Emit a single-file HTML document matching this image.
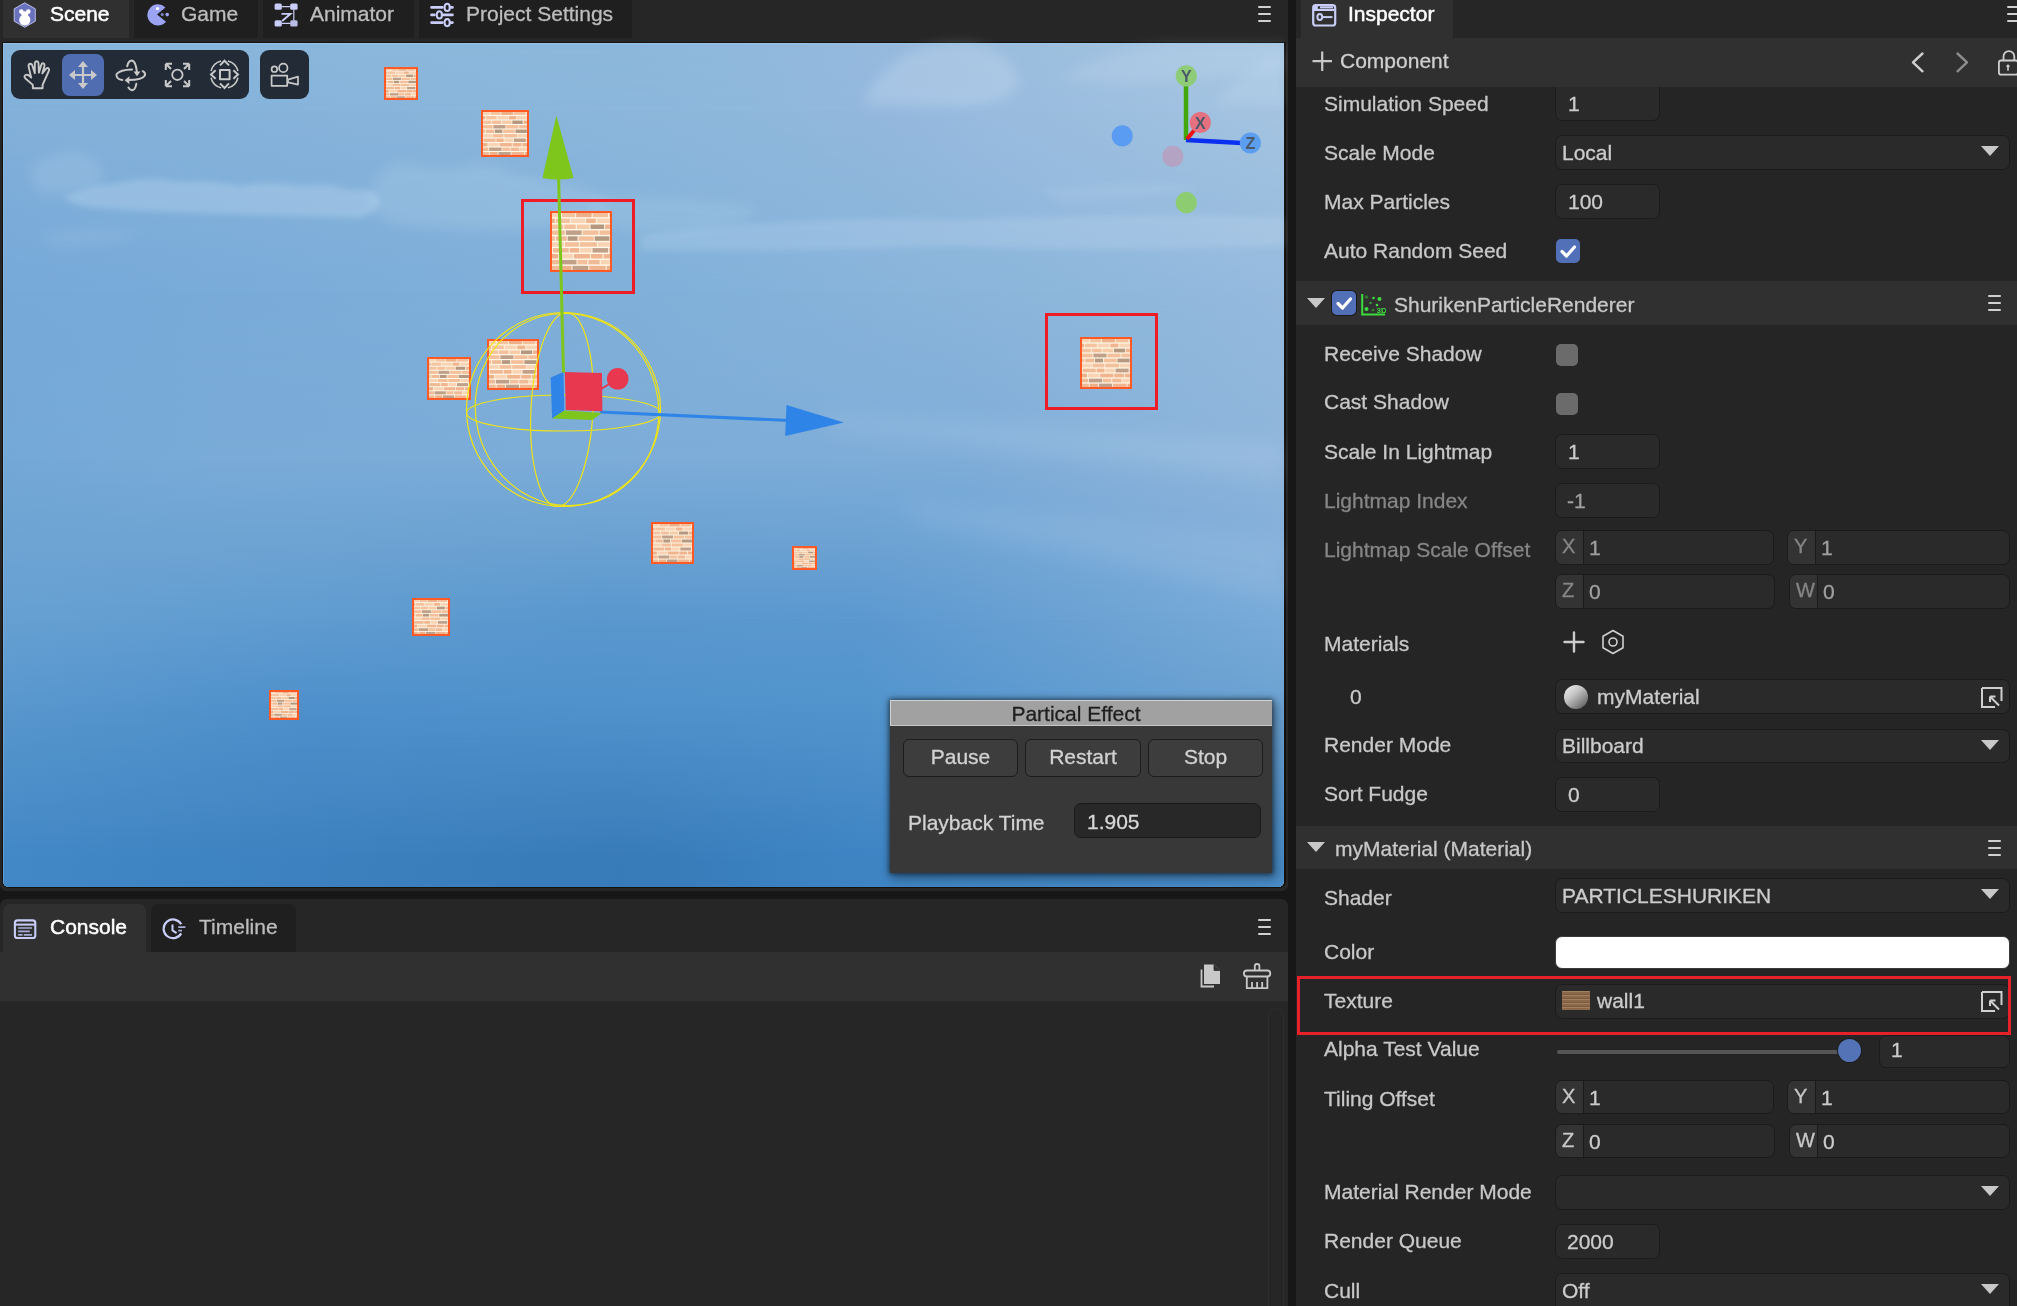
<!DOCTYPE html>
<html><head><meta charset="utf-8">
<style>
*{box-sizing:border-box;margin:0;padding:0}
html,body{width:2017px;height:1306px;overflow:hidden;background:#171717;font-family:"Liberation Sans",sans-serif;font-size:21px;line-height:24px;color:#d0d0d0}
.a{position:absolute}
.t{position:absolute;white-space:nowrap;line-height:24px;-webkit-text-stroke-width:0.3px}
.inp{position:absolute;background:#2a2a2a;border:1px solid #1b1b1b;border-radius:7px}
.cb{position:absolute;border-radius:5px}
.tri{position:absolute;width:0;height:0;border-left:9px solid transparent;border-right:9px solid transparent;border-top:10px solid #c8c8c8}

.sky{position:absolute;left:0;top:0;width:1281px;height:844px}
</style></head><body>
<div style="position:absolute;left:0;top:0;width:2017px;height:1306px;will-change:transform">
<div class="a" style="left:0;top:0;width:1288px;height:891px;background:#262626;border-radius:0 0 6px 6px;overflow:hidden">
  <div class="a" style="left:3px;top:0;width:126px;height:38px;background:#303030"></div>
  <div class="a" style="left:134px;top:0;width:124px;height:38px;background:#1f1f1f"></div>
  <div class="a" style="left:263px;top:0;width:151px;height:38px;background:#1f1f1f"></div>
  <div class="a" style="left:419px;top:0;width:213px;height:38px;background:#1f1f1f"></div>
</div>
<div class="a" style="left:0;top:899px;width:1288px;height:407px;background:#262626;border-radius:7px 7px 0 0;overflow:hidden">
  <div class="a" style="left:3px;top:5px;width:143px;height:48px;background:#303030;border-radius:7px 7px 0 0"></div>
  <div class="a" style="left:151px;top:5px;width:145px;height:48px;background:#1f1f1f;border-radius:7px 7px 0 0"></div>
  <div class="a" style="left:0;top:53px;width:1288px;height:49px;background:#303030"></div>
  <div class="a" style="left:1268px;top:109px;width:16px;height:320px;border:1px solid #2e2e2e;border-radius:8px"></div>
</div>
<div class="a" style="left:1296px;top:0;width:721px;height:1306px;background:#252525;overflow:hidden">
  <div class="a" style="left:0;top:0;width:721px;height:38px;background:#262626"></div>
  <div class="a" style="left:5px;top:0;width:152px;height:38px;background:#303030"></div>
  <div class="a" style="left:0;top:38px;width:721px;height:49px;background:#303030"></div>
</div>
<div class="a" style="left:2px;top:42px;width:1284px;height:846px;background:#15110f;border-radius:0 0 7px 7px;overflow:hidden">
<div class="a" style="left:1px;top:1px;width:1281px;height:844px;border-radius:0 0 6px 6px;overflow:hidden">
<div class="sky" style="background:linear-gradient(90deg,#88b5dc 0px,#8db8dc 637px,#96badd 897px,#a8c7e2 1281px)"></div>
<div class="sky" style="background:linear-gradient(90deg,#82b0d9 0px,#8cb7dc 657px,#94b8dd 877px,#a4c4e1 1281px);-webkit-mask-image:linear-gradient(180deg,transparent 0px,#000 67px);mask-image:linear-gradient(180deg,transparent 0px,#000 67px)"></div>
<div class="sky" style="background:linear-gradient(90deg,#77a9d8 0px,#80b0d9 637px,#95badd 1281px);-webkit-mask-image:linear-gradient(180deg,transparent 67px,#000 247px);mask-image:linear-gradient(180deg,transparent 67px,#000 247px)"></div>
<div class="sky" style="background:linear-gradient(90deg,#74a8d6 0px,#7aabd7 217px,#7eadd8 957px,#8fb5dc 1281px);-webkit-mask-image:linear-gradient(180deg,transparent 247px,#000 417px);mask-image:linear-gradient(180deg,transparent 247px,#000 417px)"></div>
<div class="sky" style="background:linear-gradient(90deg,#66a0d2 0px,#5997cd 597px,#5b98cf 857px,#79abd8 1281px);-webkit-mask-image:linear-gradient(180deg,transparent 417px,#000 577px);mask-image:linear-gradient(180deg,transparent 417px,#000 577px)"></div>
<div class="sky" style="background:linear-gradient(90deg,#5997cd 0px,#4f90cc 297px,#5294cd 857px,#6ca2d2 1281px);-webkit-mask-image:linear-gradient(180deg,transparent 577px,#000 662px);mask-image:linear-gradient(180deg,transparent 577px,#000 662px)"></div>
<div class="sky" style="background:linear-gradient(90deg,#4288c6 0px,#377bb8 617px,#3e84c3 857px,#4a8dc8 1281px);-webkit-mask-image:linear-gradient(180deg,transparent 662px,#000 817px);mask-image:linear-gradient(180deg,transparent 662px,#000 817px)"></div>
<div class="a" style="left:0;top:0;width:1281px;height:1px;background:rgba(160,205,240,0.6)"></div><div class="a" style="left:0;top:0;width:1px;height:844px;background:rgba(150,200,240,0.35)"></div>
</div></div>
<div class="a" style="left:0;top:0;width:1288px;height:888px;overflow:hidden">
<svg class="a" style="left:0;top:0" width="2017" height="900" viewBox="0 0 2017 900"><defs><pattern id="brick" patternUnits="objectBoundingBox" patternContentUnits="objectBoundingBox" width="1" height="1"><rect x="0" y="0" width="1" height="1" fill="#fff8e8"/><rect x="0.000" y="0.012" width="0.167" height="0.076" fill="#f8d4b4"/><rect x="0.183" y="0.012" width="0.220" height="0.076" fill="#f4c4a0"/><rect x="0.419" y="0.012" width="0.259" height="0.076" fill="#eeb088"/><rect x="0.693" y="0.012" width="0.257" height="0.076" fill="#f4c09c"/><rect x="0.967" y="0.012" width="0.033" height="0.076" fill="#f4c4a0"/><rect x="0.000" y="0.112" width="0.063" height="0.076" fill="#eeb088"/><rect x="0.079" y="0.112" width="0.239" height="0.076" fill="#f4c4a0"/><rect x="0.334" y="0.112" width="0.235" height="0.076" fill="#f8d4b4"/><rect x="0.585" y="0.112" width="0.162" height="0.076" fill="#f0b48e"/><rect x="0.763" y="0.112" width="0.232" height="0.076" fill="#f8d4b4"/><rect x="0.000" y="0.212" width="0.205" height="0.076" fill="#f4c4a0"/><rect x="0.221" y="0.212" width="0.192" height="0.076" fill="#f4c09c"/><rect x="0.430" y="0.212" width="0.213" height="0.076" fill="#f6cca8"/><rect x="0.659" y="0.212" width="0.226" height="0.076" fill="#b49880"/><rect x="0.901" y="0.212" width="0.099" height="0.076" fill="#f0b48e"/><rect x="0.004" y="0.312" width="0.227" height="0.076" fill="#f4c09c"/><rect x="0.247" y="0.312" width="0.264" height="0.076" fill="#c0a088"/><rect x="0.527" y="0.312" width="0.264" height="0.076" fill="#f4c09c"/><rect x="0.807" y="0.312" width="0.193" height="0.076" fill="#f4c09c"/><rect x="0.000" y="0.412" width="0.067" height="0.076" fill="#f4c09c"/><rect x="0.083" y="0.412" width="0.180" height="0.076" fill="#efba96"/><rect x="0.278" y="0.412" width="0.165" height="0.076" fill="#b49880"/><rect x="0.460" y="0.412" width="0.253" height="0.076" fill="#f4c09c"/><rect x="0.728" y="0.412" width="0.246" height="0.076" fill="#b49880"/><rect x="0.990" y="0.412" width="0.010" height="0.076" fill="#f4c4a0"/><rect x="0.000" y="0.512" width="0.214" height="0.076" fill="#f8d4b4"/><rect x="0.230" y="0.512" width="0.238" height="0.076" fill="#f4c09c"/><rect x="0.483" y="0.512" width="0.283" height="0.076" fill="#f4c09c"/><rect x="0.782" y="0.512" width="0.218" height="0.076" fill="#f8d4b4"/><rect x="0.000" y="0.612" width="0.015" height="0.076" fill="#f0b48e"/><rect x="0.031" y="0.612" width="0.265" height="0.076" fill="#efba96"/><rect x="0.312" y="0.612" width="0.159" height="0.076" fill="#f0b48e"/><rect x="0.487" y="0.612" width="0.188" height="0.076" fill="#f8d4b4"/><rect x="0.691" y="0.612" width="0.262" height="0.076" fill="#c0a088"/><rect x="0.969" y="0.612" width="0.031" height="0.076" fill="#efba96"/><rect x="0.000" y="0.712" width="0.120" height="0.076" fill="#eeb088"/><rect x="0.136" y="0.712" width="0.230" height="0.076" fill="#f8d4b4"/><rect x="0.382" y="0.712" width="0.267" height="0.076" fill="#f0b48e"/><rect x="0.665" y="0.712" width="0.194" height="0.076" fill="#f0b48e"/><rect x="0.876" y="0.712" width="0.124" height="0.076" fill="#f0b48e"/><rect x="0.000" y="0.812" width="0.140" height="0.076" fill="#efba96"/><rect x="0.156" y="0.812" width="0.269" height="0.076" fill="#c0a088"/><rect x="0.440" y="0.812" width="0.167" height="0.076" fill="#f4c09c"/><rect x="0.624" y="0.812" width="0.187" height="0.076" fill="#efba96"/><rect x="0.827" y="0.812" width="0.173" height="0.076" fill="#f8d4b4"/><rect x="0.000" y="0.912" width="0.156" height="0.076" fill="#efba96"/><rect x="0.172" y="0.912" width="0.170" height="0.076" fill="#eeb088"/><rect x="0.358" y="0.912" width="0.265" height="0.076" fill="#c0a088"/><rect x="0.639" y="0.912" width="0.273" height="0.076" fill="#f0b48e"/><rect x="0.928" y="0.912" width="0.072" height="0.076" fill="#eeb088"/></pattern><filter id="b3" x="-20%" y="-50%" width="140%" height="200%"><feGaussianBlur stdDeviation="3"/></filter><filter id="b6" x="-20%" y="-50%" width="140%" height="200%"><feGaussianBlur stdDeviation="6"/></filter><filter id="b10" x="-30%" y="-80%" width="160%" height="260%"><feGaussianBlur stdDeviation="10"/></filter></defs>
<g fill="#eaf4ff"><path d="M64 197 Q90 186 122 182 Q150 176 180 182 Q215 180 240 186 Q270 180 300 186 Q330 183 350 190 Q372 186 380 200 Q378 214 360 218 Q300 216 230 214 Q150 212 96 208 Q70 206 64 197 Z" opacity="0.22" filter="url(#b3)"/><path d="M370 190 Q385 160 405 163 Q430 170 460 168 Q490 158 510 172 Q545 178 575 186 Q600 192 610 205 Q585 226 520 230 Q450 232 395 224 Q368 215 370 190 Z" opacity="0.13" filter="url(#b6)"/><path d="M30 168 Q50 150 80 152 Q112 164 100 186 Q70 196 36 192 Z" opacity="0.12" filter="url(#b6)"/><path d="M590 196 Q680 194 760 208 Q740 232 650 234 Q600 228 590 214 Z" opacity="0.10" filter="url(#b6)"/><path d="M40 235 Q90 225 140 232 Q110 248 50 246 Z" opacity="0.08" filter="url(#b6)"/><path d="M864 104 Q872 78 905 55 Q935 40 975 44 Q1010 52 1020 82 Q1012 104 960 106 Z" opacity="0.20" filter="url(#b6)"/><path d="M1060 80 Q1100 50 1170 43 L1284 43 V68 Q1200 80 1120 84 Z" opacity="0.12" filter="url(#b6)"/><path d="M1215 104 Q1240 70 1284 55 V104 Z" opacity="0.12" filter="url(#b6)"/><path d="M640 236 Q800 214 960 220 Q1120 212 1284 218 V246 Q1100 252 960 246 Q800 252 640 250 Z" opacity="0.15" filter="url(#b3)"/><path d="M1040 190 Q1120 180 1200 186 Q1150 200 1060 202 Z" opacity="0.08" filter="url(#b3)"/><path d="M820 415 Q1000 418 1284 445 V480 Q1050 455 830 432 Z" opacity="0.10" filter="url(#b10)"/><path d="M900 500 Q1100 515 1284 540 V600 Q1080 560 920 525 Z" opacity="0.08" filter="url(#b10)"/></g>
<rect x="385" y="68" width="32" height="31" fill="url(#brick)" stroke="#ff5a26" stroke-width="2"/>
<rect x="482" y="111" width="46" height="45" fill="url(#brick)" stroke="#ff5a26" stroke-width="2"/>
<rect x="551" y="212" width="60" height="59" fill="url(#brick)" stroke="#ff5a26" stroke-width="2"/>
<rect x="428" y="358" width="42" height="41" fill="url(#brick)" stroke="#ff5a26" stroke-width="2"/>
<rect x="488" y="340" width="50" height="49" fill="url(#brick)" stroke="#ff5a26" stroke-width="2"/>
<rect x="652" y="523" width="41" height="40" fill="url(#brick)" stroke="#ff5a26" stroke-width="2"/>
<rect x="793" y="547" width="23" height="22" fill="url(#brick)" stroke="#ff5a26" stroke-width="2"/>
<rect x="413" y="599" width="36" height="36" fill="url(#brick)" stroke="#ff5a26" stroke-width="2"/>
<rect x="270" y="691" width="28" height="28" fill="url(#brick)" stroke="#ff5a26" stroke-width="2"/>
<rect x="1081" y="338" width="50" height="50" fill="url(#brick)" stroke="#ff5a26" stroke-width="2"/>
<rect x="522.5" y="200.5" width="111" height="92" fill="none" stroke="#ee1c24" stroke-width="3"/>
<rect x="1046.5" y="314.5" width="110" height="94" fill="none" stroke="#ee1c24" stroke-width="3"/>
<g fill="none" stroke="#f0e415" stroke-width="1.2"><circle cx="563.5" cy="409.5" r="97"/><ellipse cx="567" cy="409.5" rx="91.5" ry="96.5" transform="rotate(-15 567 409.5)"/><ellipse cx="563.5" cy="413" rx="97" ry="18"/><ellipse cx="562" cy="409.5" rx="31" ry="97" transform="rotate(3 562 409.5)"/></g>
<line x1="558.6" y1="178" x2="563.5" y2="373" stroke="#7ec61b" stroke-width="3"/><path d="M556.4 115.5 L573.5 178 Q558 181 542.5 178 Z" fill="#7ec61b"/>
<line x1="600" y1="412" x2="790" y2="420.5" stroke="#2f84e8" stroke-width="3.2"/><path d="M786.5 405 L844 422.6 L785.2 436 Z" fill="#2f84e8"/>
<path d="M550.7 377.4 L563.5 372 L564.3 410.5 L552.1 418.4 Z" fill="#2f84e8"/><path d="M564.3 410.5 L601.7 412.9 L592.4 420.1 L552.1 418.4 Z" fill="#7ec61b"/><path d="M564.8 371.9 L602 373 L602.4 411.2 L565.8 410.1 Z" fill="#e8384f"/><line x1="601" y1="389" x2="611" y2="383" stroke="#e8384f" stroke-width="2"/><circle cx="617.7" cy="378.8" r="10.8" fill="#e8384f"/>
<line x1="1186" y1="86" x2="1186" y2="140" stroke="#44a80c" stroke-width="4.5"/><line x1="1186" y1="140" x2="1242" y2="143" stroke="#0a2ff0" stroke-width="4.5"/><line x1="1187" y1="139" x2="1197" y2="127" stroke="#ee1111" stroke-width="4"/><circle cx="1122.3" cy="135.9" r="10.6" fill="#5a9cf2"/><circle cx="1172.9" cy="156.4" r="10.6" fill="#b4a3c2"/><circle cx="1186.3" cy="202.7" r="10.6" fill="#8dcc70"/><circle cx="1186.3" cy="75.9" r="10.6" fill="#8fcc78"/><text x="1186.3" y="81.9" text-anchor="middle" font-family="Liberation Sans" font-weight="bold" font-size="16" fill="#4a5868">Y</text><circle cx="1200.4" cy="122.5" r="10.6" fill="#e5707f"/><text x="1200.4" y="128.5" text-anchor="middle" font-family="Liberation Sans" font-weight="bold" font-size="16" fill="#4a5868">X</text><circle cx="1250.4" cy="143" r="10.6" fill="#5b9ef0"/><text x="1250.4" y="149" text-anchor="middle" font-family="Liberation Sans" font-weight="bold" font-size="16" fill="#4a5868">Z</text>
</svg>
<div class="a" style="left:11px;top:50px;width:238px;height:49px;background:#232c36;border-radius:9px"></div>
<div class="a" style="left:62px;top:54px;width:42px;height:42px;background:#4f6db0;border-radius:8px"></div>
<div class="a" style="left:260px;top:50px;width:49px;height:49px;background:#232c36;border-radius:9px"></div>
<svg class="a" style="left:0;top:40px" width="320" height="70" viewBox="0 40 320 70" fill="none" stroke="#c9c9c9" stroke-width="2" stroke-linecap="round" stroke-linejoin="round">
<path d="M32.8 88.2 V84.9 L25.2 78.2 Q23.6 76.2 25.6 75 Q27.4 74.2 29.3 75.8 L31.2 77.6 L28.6 66.6 Q28.4 64 30.3 63.8 Q32 63.8 32.5 66 L34.8 73.2 L34.8 63 Q35 61.3 36.7 61.3 Q38.3 61.4 38.5 63 L38.9 72.6 L41.3 64.8 Q42 63 43.4 63.4 Q44.9 64 44.5 65.8 L42.3 73.4 L46.4 68.4 Q47.6 67.4 48.6 68.4 Q49.6 69.6 48.8 71 L42.6 84.9 V88.2 Z" stroke-width="1.9"/>
<g fill="#c9c9c9" stroke="none"><path d="M83 61 L88 67 L78 67 Z"/><path d="M83 89 L88 83 L78 83 Z"/><path d="M69 75 L75 70 L75 80 Z"/><path d="M97 75 L91 70 L91 80 Z"/></g>
<path d="M83 66 V84 M74 75 H92" stroke-width="2.2"/>
<path d="M127.2 66.2 Q128.6 60.6 131.7 60.6 Q135.6 60.8 136.9 72"/><path d="M133.5 71.4 L137 76.2 L140.5 71.4 Z" fill="#c9c9c9" stroke="none"/>
<path d="M132 69.4 Q120 69.6 116.6 74 Q115.4 78.6 122.3 80.1"/><path d="M128.3 80.1 Q142.5 80 144.9 75.6 Q145.7 72.6 142.7 71.2"/><path d="M129.4 76.2 L124.6 80.2 L129.4 84.2 Z" fill="#c9c9c9" stroke="none"/>
<path d="M136.3 83.8 Q135.2 90.3 131.9 90.2 Q129.6 89.8 128.4 87.6"/>
<circle cx="177.4" cy="74.8" r="5.2" stroke-width="1.8"/>
<path d="M166.3 64.3 L171 69 M165.8 63.8 H172 M165.8 63.8 V70" stroke-linecap="butt"/><path d="M188.7 64.3 L184 69 M189.2 63.8 H183 M189.2 63.8 V70" stroke-linecap="butt"/>
<path d="M166.3 85.7 L171 81 M165.8 86.2 H172 M165.8 86.2 V80" stroke-linecap="butt"/><path d="M188.7 85.7 L184 81 M189.2 86.2 H183 M189.2 86.2 V80" stroke-linecap="butt"/>
<rect x="220" y="70" width="9.6" height="9.2" stroke-width="2"/>
<path d="M220 65.4 L224.5 60.8 L229 65.4 M220 83.4 L224.5 88 L229 83.4 M215.6 70.2 L211 74.4 L215.6 78.8 M233.4 70.2 L238 74.4 L233.4 78.8" stroke-width="2" stroke-linecap="butt" stroke-linejoin="miter"/>
<path d="M227.86 60.91 A13.9 13.9 0 0 1 237.99 71.04 M237.99 77.76 A13.9 13.9 0 0 1 227.86 87.89 M221.14 87.89 A13.9 13.9 0 0 1 211.01 77.76 M211.01 71.04 A13.9 13.9 0 0 1 221.14 60.91 " stroke-width="1.5" stroke-linecap="butt"/>
<circle cx="274.4" cy="69.2" r="2.8" stroke-width="1.7"/><circle cx="283.3" cy="67.9" r="4.2" stroke-width="1.7"/>
<rect x="271.6" y="75.6" width="15.6" height="10.2" stroke-width="1.7"/><path d="M288 79.6 L298 76.6 V84.6 L288 82.4 Z" stroke-width="1.7"/>
</svg>
<div class="a" style="left:890px;top:700px;width:382px;height:173px;background:#383838;box-shadow:0 0 5px 1px rgba(0,0,0,0.55),3px 4px 10px 2px rgba(0,0,0,0.3)"></div>
<div class="a" style="left:890px;top:700px;width:382px;height:26px;background:#a1a1a1;border-top:1px solid #d2d2d2;border-left:1px solid #d2d2d2;border-bottom:1px solid #c8c8c8"></div>
<div class="t" style="left:885px;width:382px;text-align:center;top:702px;color:#1e1e1e">Partical Effect</div>
<div class="a" style="left:903px;top:739px;width:115px;height:38px;background:#3d3d3d;border:1px solid #1c1c1c;border-radius:6px"></div>
<div class="t" style="left:903px;width:115px;text-align:center;top:745px;color:#d2d2d2">Pause</div>
<div class="a" style="left:1025px;top:739px;width:116px;height:38px;background:#3d3d3d;border:1px solid #1c1c1c;border-radius:6px"></div>
<div class="t" style="left:1025px;width:116px;text-align:center;top:745px;color:#d2d2d2">Restart</div>
<div class="a" style="left:1148px;top:739px;width:115px;height:38px;background:#3d3d3d;border:1px solid #1c1c1c;border-radius:6px"></div>
<div class="t" style="left:1148px;width:115px;text-align:center;top:745px;color:#d2d2d2">Stop</div>
<div class="t" style="left:908px;top:811px;color:#d2d2d2">Playback Time</div>
<div class="a" style="left:1074px;top:803px;width:187px;height:35px;background:#282828;border:1px solid #1a1a1a;border-radius:7px"></div>
<div class="t" style="left:1087px;top:810px;color:#d8d8d8">1.905</div>
</div>
<div class="inp" style="left:1555px;top:80px;width:105px;height:41px;"></div>
<div class="t" style="left:1324px;top:92px;color:#c8c8c8;">Simulation Speed</div>
<div class="t" style="left:1568px;top:92px;color:#cccccc;">1</div>
<div class="inp" style="left:1555px;top:135px;width:455px;height:35px;"></div>
<div class="t" style="left:1324px;top:141px;color:#c8c8c8;">Scale Mode</div>
<div class="t" style="left:1562px;top:141px;color:#cccccc;">Local</div>
<div class="tri" style="left:1981px;top:146px;border-top-color:#c8c8c8"></div>
<div class="inp" style="left:1555px;top:184px;width:105px;height:35px;"></div>
<div class="t" style="left:1324px;top:190px;color:#c8c8c8;">Max Particles</div>
<div class="t" style="left:1568px;top:190px;color:#cccccc;">100</div>
<div class="t" style="left:1324px;top:239px;color:#c8c8c8;">Auto Random Seed</div>
<div class="cb" style="left:1556px;top:239px;width:24px;height:24px;background:#5170b8"><svg width="24" height="24" style="position:absolute;left:0;top:0"><path d="M6 12.5 L10.5 17 L18.5 8" stroke="#fff" stroke-width="3.2" fill="none" stroke-linecap="round" stroke-linejoin="round"/></svg></div>
<div class="a" style="left:1296px;top:281px;width:721px;height:44px;background:#303030"></div>
<div class="tri" style="left:1307px;top:298px;border-top-color:#c8c8c8"></div>
<div class="cb" style="left:1332px;top:291px;width:24px;height:24px;background:#5170b8;box-shadow:0 0 0 1px #1a1a1a"><svg width="24" height="24" style="position:absolute;left:0;top:0"><path d="M6 12.5 L10.5 17 L18.5 8" stroke="#fff" stroke-width="3.2" fill="none" stroke-linecap="round" stroke-linejoin="round"/></svg></div>
<svg class="a" style="left:1361px;top:293px" width="25" height="23"><path d="M1.2 1 V21.5 H24" stroke="#3ddc3d" stroke-width="2" fill="none"/>
<circle cx="5.5" cy="4" r="1.8" fill="#2f7a2f"/><circle cx="12.5" cy="5" r="1.3" fill="#3ddc3d"/><circle cx="18.5" cy="6" r="2" fill="#3ddc3d"/>
<circle cx="9.5" cy="10" r="1.3" fill="#2f9a2f"/><circle cx="16" cy="12" r="1.3" fill="#3ddc3d"/><circle cx="5.5" cy="16" r="2" fill="#3ddc3d"/><circle cx="12" cy="17" r="1.6" fill="#2f7a2f"/>
<text x="15.5" y="20" font-size="8" font-family="Liberation Sans" font-weight="bold" fill="#3ddc3d">3D</text></svg>
<div class="t" style="left:1394px;top:293px;color:#c8c8c8;">ShurikenParticleRenderer</div>
<div class="a" style="left:1988px;top:295px;width:13px;height:2px;background:#d0d0d0;border-radius:1px"></div>
<div class="a" style="left:1988px;top:302px;width:13px;height:2px;background:#d0d0d0;border-radius:1px"></div>
<div class="a" style="left:1988px;top:309px;width:13px;height:2px;background:#d0d0d0;border-radius:1px"></div>
<div class="t" style="left:1324px;top:342px;color:#c8c8c8;">Receive Shadow</div>
<div class="cb" style="left:1556px;top:344px;width:22px;height:22px;background:#6b6b6b"></div>
<div class="t" style="left:1324px;top:390px;color:#c8c8c8;">Cast Shadow</div>
<div class="cb" style="left:1556px;top:393px;width:22px;height:22px;background:#6b6b6b"></div>
<div class="inp" style="left:1555px;top:434px;width:105px;height:35px;"></div>
<div class="t" style="left:1324px;top:440px;color:#c8c8c8;">Scale In Lightmap</div>
<div class="t" style="left:1568px;top:440px;color:#cccccc;">1</div>
<div class="inp" style="left:1555px;top:483px;width:105px;height:35px;"></div>
<div class="t" style="left:1324px;top:489px;color:#868686;">Lightmap Index</div>
<div class="t" style="left:1567px;top:489px;color:#a0a0a0;">-1</div>
<div class="t" style="left:1324px;top:538px;color:#868686;">Lightmap Scale Offset</div>
<div class="inp" style="left:1555px;top:530px;width:219px;height:35px;overflow:hidden"><div class="a" style="left:0;top:0;width:28px;height:100%;background:#333;border-right:1px solid #1b1b1b"></div></div>
<div class="t" style="left:1562px;top:534px;color:#868686;font-size:20px">X</div>
<div class="t" style="left:1589px;top:536px;color:#a0a0a0;">1</div>
<div class="inp" style="left:1787px;top:530px;width:223px;height:35px;overflow:hidden"><div class="a" style="left:0;top:0;width:28px;height:100%;background:#333;border-right:1px solid #1b1b1b"></div></div>
<div class="t" style="left:1794px;top:534px;color:#868686;font-size:20px">Y</div>
<div class="t" style="left:1821px;top:536px;color:#a0a0a0;">1</div>
<div class="inp" style="left:1555px;top:574px;width:220px;height:35px;overflow:hidden"><div class="a" style="left:0;top:0;width:28px;height:100%;background:#333;border-right:1px solid #1b1b1b"></div></div>
<div class="t" style="left:1562px;top:578px;color:#868686;font-size:20px">Z</div>
<div class="t" style="left:1589px;top:580px;color:#a0a0a0;">0</div>
<div class="inp" style="left:1789px;top:574px;width:221px;height:35px;overflow:hidden"><div class="a" style="left:0;top:0;width:28px;height:100%;background:#333;border-right:1px solid #1b1b1b"></div></div>
<div class="t" style="left:1796px;top:578px;color:#868686;font-size:20px">W</div>
<div class="t" style="left:1823px;top:580px;color:#a0a0a0;">0</div>
<div class="t" style="left:1324px;top:632px;color:#c8c8c8;">Materials</div>
<svg class="a" style="left:1562px;top:630px" width="24" height="24"><path d="M12 2.5 V21.5 M2.5 12 H21.5" stroke="#cccccc" stroke-width="2.4" stroke-linecap="round"/></svg>
<svg class="a" style="left:1600px;top:629px" width="26" height="26"><path d="M13 1.5 L23 7.2 V18.8 L13 24.5 L3 18.8 V7.2 Z" stroke="#d0d0d0" stroke-width="1.6" fill="none" stroke-linejoin="round"/><circle cx="13" cy="13" r="4" stroke="#d0d0d0" stroke-width="1.6" fill="none"/></svg>
<div class="t" style="left:1350px;top:685px;color:#c8c8c8;">0</div>
<div class="inp" style="left:1555px;top:679px;width:455px;height:35px;"></div>
<div class="a" style="left:1564px;top:685px;width:24px;height:24px;border-radius:50%;background:linear-gradient(140deg,#f4f4f4 0%,#c4c4c4 40%,#8a8a8a 70%,#4a4a4a 100%)"></div>
<div class="t" style="left:1597px;top:685px;color:#cccccc;">myMaterial</div>
<svg class="a" style="left:1981px;top:687px" width="22" height="21"><path d="M1 1 H20.5 V14 M14 20 H1 V1" stroke="#cfcfcf" stroke-width="2" fill="none"/><path d="M18 18.5 L9 9.5 M9 9.5 V15 M9 9.5 H14.5" stroke="#cfcfcf" stroke-width="2" fill="none"/></svg>
<div class="inp" style="left:1555px;top:729px;width:455px;height:34px;"></div>
<div class="t" style="left:1324px;top:733px;color:#c8c8c8;">Render Mode</div>
<div class="t" style="left:1562px;top:734px;color:#cccccc;">Billboard</div>
<div class="tri" style="left:1981px;top:740px;border-top-color:#c8c8c8"></div>
<div class="inp" style="left:1555px;top:777px;width:105px;height:35px;"></div>
<div class="t" style="left:1324px;top:782px;color:#c8c8c8;">Sort Fudge</div>
<div class="t" style="left:1568px;top:783px;color:#cccccc;">0</div>
<div class="a" style="left:1296px;top:826px;width:721px;height:43px;background:#303030"></div>
<div class="tri" style="left:1307px;top:842px;border-top-color:#c8c8c8"></div>
<div class="t" style="left:1335px;top:837px;color:#c8c8c8;">myMaterial (Material)</div>
<div class="a" style="left:1988px;top:840px;width:13px;height:2px;background:#d0d0d0;border-radius:1px"></div>
<div class="a" style="left:1988px;top:847px;width:13px;height:2px;background:#d0d0d0;border-radius:1px"></div>
<div class="a" style="left:1988px;top:854px;width:13px;height:2px;background:#d0d0d0;border-radius:1px"></div>
<div class="inp" style="left:1555px;top:878px;width:455px;height:35px;"></div>
<div class="t" style="left:1324px;top:886px;color:#c8c8c8;">Shader</div>
<div class="t" style="left:1562px;top:884px;color:#cccccc;">PARTICLESHURIKEN</div>
<div class="tri" style="left:1981px;top:889px;border-top-color:#c8c8c8"></div>
<div class="t" style="left:1324px;top:940px;color:#c8c8c8;">Color</div>
<div class="a" style="left:1555px;top:936px;width:455px;height:33px;background:#fff;border-radius:7px;border:1px solid #3a3a3a"></div>
<div class="t" style="left:1324px;top:989px;color:#c8c8c8;">Texture</div>
<div class="inp" style="left:1555px;top:984px;width:455px;height:35px;"></div>
<div class="a" style="left:1562px;top:991px;width:28px;height:19px;background:repeating-linear-gradient(180deg,#a08060 0 1px,#8a6848 1px 3px,#7a5a3e 3px 4px),#8a6a48"></div>
<div class="t" style="left:1597px;top:989px;color:#cccccc;">wall1</div>
<svg class="a" style="left:1981px;top:991px" width="22" height="21"><path d="M1 1 H20.5 V14 M14 20 H1 V1" stroke="#cfcfcf" stroke-width="2" fill="none"/><path d="M18 18.5 L9 9.5 M9 9.5 V15 M9 9.5 H14.5" stroke="#cfcfcf" stroke-width="2" fill="none"/></svg>
<div class="a" style="left:1297px;top:976px;width:714px;height:59px;border:3px solid #e8202a"></div>
<div class="t" style="left:1324px;top:1037px;color:#c8c8c8;">Alpha Test Value</div>
<div class="a" style="left:1557px;top:1050px;width:283px;height:4px;background:#555555;border-radius:2px"></div>
<div class="a" style="left:1838px;top:1039px;width:23px;height:23px;border-radius:50%;background:#5473b6;box-shadow:0 0 0 1px #1c1c1c"></div>
<div class="inp" style="left:1879px;top:1035px;width:131px;height:33px;"></div>
<div class="t" style="left:1891px;top:1038px;color:#cccccc;">1</div>
<div class="t" style="left:1324px;top:1087px;color:#c8c8c8;">Tiling Offset</div>
<div class="inp" style="left:1555px;top:1080px;width:219px;height:34px;overflow:hidden"><div class="a" style="left:0;top:0;width:28px;height:100%;background:#333;border-right:1px solid #1b1b1b"></div></div>
<div class="t" style="left:1562px;top:1084px;color:#c8c8c8;font-size:20px">X</div>
<div class="t" style="left:1589px;top:1086px;color:#cccccc;">1</div>
<div class="inp" style="left:1787px;top:1080px;width:223px;height:34px;overflow:hidden"><div class="a" style="left:0;top:0;width:28px;height:100%;background:#333;border-right:1px solid #1b1b1b"></div></div>
<div class="t" style="left:1794px;top:1084px;color:#c8c8c8;font-size:20px">Y</div>
<div class="t" style="left:1821px;top:1086px;color:#cccccc;">1</div>
<div class="inp" style="left:1555px;top:1124px;width:220px;height:34px;overflow:hidden"><div class="a" style="left:0;top:0;width:28px;height:100%;background:#333;border-right:1px solid #1b1b1b"></div></div>
<div class="t" style="left:1562px;top:1128px;color:#c8c8c8;font-size:20px">Z</div>
<div class="t" style="left:1589px;top:1130px;color:#cccccc;">0</div>
<div class="inp" style="left:1789px;top:1124px;width:221px;height:34px;overflow:hidden"><div class="a" style="left:0;top:0;width:28px;height:100%;background:#333;border-right:1px solid #1b1b1b"></div></div>
<div class="t" style="left:1796px;top:1128px;color:#c8c8c8;font-size:20px">W</div>
<div class="t" style="left:1823px;top:1130px;color:#cccccc;">0</div>
<div class="inp" style="left:1555px;top:1175px;width:455px;height:35px;"></div>
<div class="t" style="left:1324px;top:1180px;color:#c8c8c8;">Material Render Mode</div>
<div class="tri" style="left:1981px;top:1186px;border-top-color:#c8c8c8"></div>
<div class="inp" style="left:1555px;top:1224px;width:105px;height:35px;"></div>
<div class="t" style="left:1324px;top:1229px;color:#c8c8c8;">Render Queue</div>
<div class="t" style="left:1567px;top:1230px;color:#cccccc;">2000</div>
<div class="inp" style="left:1555px;top:1273px;width:455px;height:47px;"></div>
<div class="t" style="left:1324px;top:1279px;color:#c8c8c8;">Cull</div>
<div class="t" style="left:1562px;top:1279px;color:#cccccc;">Off</div>
<div class="tri" style="left:1981px;top:1284px;border-top-color:#c8c8c8"></div>
<div class="a" style="left:1296px;top:38px;width:721px;height:49px;background:#303030"></div>
<div class="t" style="left:50px;top:2px;color:#ffffff;-webkit-text-stroke-width:0.5px">Scene</div>
<div class="t" style="left:181px;top:2px;color:#bdbdbd;">Game</div>
<div class="t" style="left:310px;top:2px;color:#bdbdbd;">Animator</div>
<div class="t" style="left:466px;top:2px;color:#bdbdbd;">Project Settings</div>
<div class="a" style="left:1258px;top:6px;width:13px;height:2px;background:#d0d0d0;border-radius:1px"></div>
<div class="a" style="left:1258px;top:13px;width:13px;height:2px;background:#d0d0d0;border-radius:1px"></div>
<div class="a" style="left:1258px;top:20px;width:13px;height:2px;background:#d0d0d0;border-radius:1px"></div>
<div class="t" style="left:1348px;top:2px;color:#ffffff;-webkit-text-stroke-width:0.5px">Inspector</div>
<div class="a" style="left:2007px;top:6px;width:13px;height:2px;background:#d0d0d0;border-radius:1px"></div>
<div class="a" style="left:2007px;top:13px;width:13px;height:2px;background:#d0d0d0;border-radius:1px"></div>
<div class="a" style="left:2007px;top:20px;width:13px;height:2px;background:#d0d0d0;border-radius:1px"></div>
<div class="t" style="left:1340px;top:49px;color:#cfcfcf;">Component</div>
<div class="t" style="left:50px;top:915px;color:#ffffff;-webkit-text-stroke-width:0.5px">Console</div>
<div class="t" style="left:199px;top:915px;color:#bdbdbd;">Timeline</div>
<div class="a" style="left:1258px;top:919px;width:13px;height:2px;background:#d0d0d0;border-radius:1px"></div>
<div class="a" style="left:1258px;top:926px;width:13px;height:2px;background:#d0d0d0;border-radius:1px"></div>
<div class="a" style="left:1258px;top:933px;width:13px;height:2px;background:#d0d0d0;border-radius:1px"></div>
<svg class="a" style="left:0;top:0" width="2017" height="1306" viewBox="0 0 2017 1306">
<path d="M24.7 2.8 L35.3 8.8 V21.2 L24.7 27.3 L14.2 21.2 V8.8 Z" fill="#6a71bd" stroke="#c5c8ee" stroke-width="0.9"/><g fill="#fff"><circle cx="21.3" cy="11.6" r="2.3"/><circle cx="28.3" cy="11.6" r="2.3"/><ellipse cx="24.8" cy="14" rx="3.6" ry="2.8"/><circle cx="24.8" cy="20" r="5.6"/></g>
<path d="M165.4 7.4 A10.6 10.6 0 1 0 166 21.8 L157 14.6 Z" fill="#9ba4f2"/><circle cx="157.5" cy="8.6" r="1.6" fill="#fff"/><circle cx="162.2" cy="14.6" r="1.5" fill="#7f86c8"/><circle cx="167.2" cy="14.6" r="1.8" fill="#9ba4f2"/>
<g fill="#c9cdf7"><rect x="274.6" y="3.4" width="7.2" height="6.4" rx="1.5"/><rect x="290.2" y="3.4" width="7.4" height="6.4" rx="1.5"/><rect x="274.6" y="20.2" width="7.2" height="6.3" rx="1.5"/><rect x="290.2" y="20.2" width="7.4" height="6.3" rx="1.5" fill="#b9bde6"/></g><g stroke="#c9cdf7" fill="none"><path d="M281.5 6.6 H290.5 M281.5 23.4 H290.5" stroke-width="1.2"/><path d="M293.8 9.5 V20.5" stroke-width="1.2"/><path d="M281.5 13.8 H290.5 L282.2 21" stroke-width="1.8"/></g>
<g stroke="#c9cdf7" stroke-width="2.6" fill="none" stroke-linecap="round"><path d="M431.5 7.4 H442.5 M450 7.4 H452.5 M431.5 14.9 H434.5 M442 14.9 H452.5 M431.5 22.6 H442.5 M450 22.6 H452.5"/></g><g stroke="#c9cdf7" stroke-width="2" fill="none"><ellipse cx="447.2" cy="7.4" rx="2.6" ry="3.6"/><ellipse cx="439.4" cy="14.9" rx="2.6" ry="3.6"/><ellipse cx="447.2" cy="22.6" rx="2.6" ry="3.6"/></g>
<rect x="1313.2" y="5.1" width="22" height="20.4" rx="2.6" fill="none" stroke="#c9cdf7" stroke-width="2.2"/><rect x="1313.2" y="5.1" width="4.6" height="5" fill="#c9cdf7"/><path d="M1320 7.3 H1333" stroke="#c9cdf7" stroke-width="2"/><path d="M1314 9.9 H1334.5" stroke="#c9cdf7" stroke-width="2.2"/><ellipse cx="1319.8" cy="17.1" rx="2.4" ry="3" fill="none" stroke="#c9cdf7" stroke-width="2"/><path d="M1322.5 17.1 H1332.5" stroke="#c9cdf7" stroke-width="2"/>
<rect x="14.9" y="920.4" width="20.4" height="17.6" rx="2.6" fill="none" stroke="#c9cdf7" stroke-width="2.1"/><path d="M15 924.6 H35" stroke="#c9cdf7" stroke-width="2"/><g stroke="#a9aed8" stroke-width="1.7"><path d="M18.2 928 H32 M18.2 931.4 H29.8 M18.2 934.9 H22.6 M23.8 934.9 H32"/></g>
<path d="M181.2 924.2 A9.4 9.4 0 1 0 181.2 933.4" fill="none" stroke="#c9cdf7" stroke-width="2.2"/><path d="M172.5 924.5 V930.4 L176.6 933.2" fill="none" stroke="#c9cdf7" stroke-width="2"/><path d="M178.2 927.1 H185.4 M178.2 930.7 H182" stroke="#aab0d8" stroke-width="1.8"/>
<path d="M1322.2 51.5 V71 M1312.5 61.2 H1332" stroke="#c8c8c8" stroke-width="2.2"/>
<path d="M1922.5 53.5 L1913 62.4 L1922.5 71.3" fill="none" stroke="#cfcfcf" stroke-width="2.4" stroke-linecap="round" stroke-linejoin="round"/><path d="M1957.5 53.5 L1967 62.4 L1957.5 71.3" fill="none" stroke="#8c8c8c" stroke-width="2.4" stroke-linecap="round" stroke-linejoin="round"/><path d="M2003.5 60 V56.5 A5.4 5.4 0 0 1 2014.3 56.5 V60" fill="none" stroke="#cfcfcf" stroke-width="1.8"/><rect x="1998.9" y="60.5" width="19" height="14.2" rx="2.2" fill="none" stroke="#cfcfcf" stroke-width="1.8"/><circle cx="2008" cy="66" r="1.6" fill="#cfcfcf"/><path d="M2008 66 V70.8" stroke="#cfcfcf" stroke-width="1.6"/>
<path d="M1201.5 969.5 V986.5 H1214" fill="none" stroke="#c8c8c8" stroke-width="1.8"/><path d="M1204 964.5 H1214 L1220 970.5 V984 H1204 Z" fill="#c8c8c8"/><path d="M1214 964.5 V970.5 H1220" fill="#303030" stroke="#303030" stroke-width="0.8"/>
<g fill="none" stroke="#c8c8c8" stroke-width="1.8" stroke-linejoin="round"><path d="M1254.8 970.5 V966.3 A2.3 2.3 0 0 1 1259.4 966.3 V970.5"/><rect x="1243.9" y="970.5" width="26.4" height="6" rx="3"/><path d="M1246.8 976.5 V988.2 H1267.4 V976.5"/><path d="M1252 988 V982 M1257.1 988 V982 M1262.2 988 V982"/></g>
</svg>
</div></body></html>
